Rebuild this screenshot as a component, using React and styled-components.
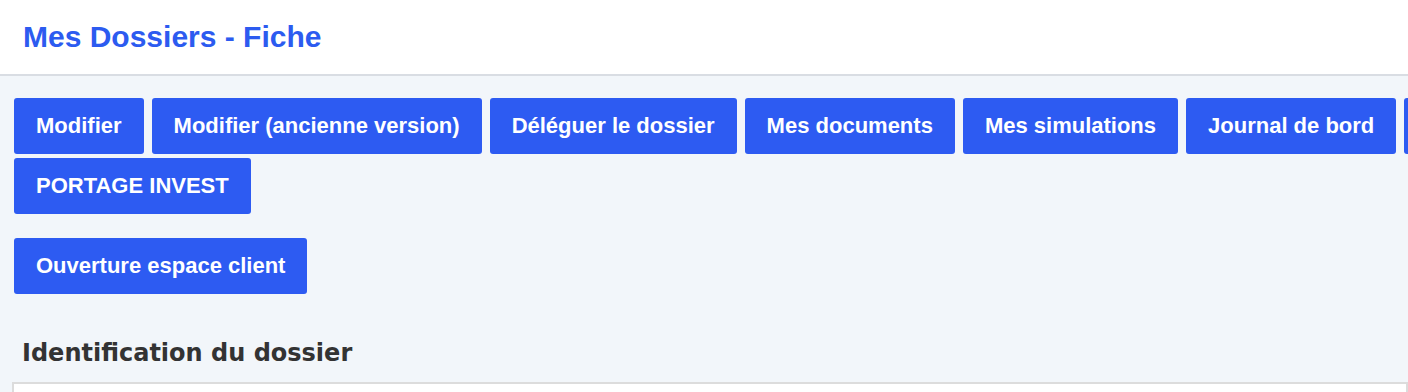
import React from "react";
import styled, { createGlobalStyle } from "styled-components";

const Global = createGlobalStyle`
  html, body { margin: 0; padding: 0; }
  body {
    background: #f2f6fa;
    font-family: "Liberation Sans", Arial, sans-serif;
    overflow: hidden;
  }
`;

const Page = styled.div`
  width: 1408px;
  min-height: 392px;
  overflow: hidden;
`;

const Header = styled.header`
  height: 74px;
  display: flex;
  align-items: center;
  padding: 0 23px;
  background: #ffffff;
  border-bottom: 2px solid #d9dde3;
`;

const Title = styled.h1`
  margin: 0;
  font-family: "Liberation Sans", Arial, sans-serif;
  font-size: 30px;
  font-weight: 700;
  color: #2c5bf0;
`;

const Content = styled.main`
  padding: 22px 0 0 14px;
  display: flex;
  flex-direction: column;
`;

const ButtonGroup = styled.div`
  display: flex;
  flex-wrap: wrap;
  column-gap: 8px;
  row-gap: 4px;
  width: ${(p) => p.$width || "auto"};
  margin-bottom: ${(p) => p.$mb || "0"};
`;

const ActionButton = styled.button`
  height: 56px;
  padding: 0 22px;
  border: none;
  border-radius: 3px;
  background: #2d5bf2;
  color: #ffffff;
  font-family: "Liberation Sans", Arial, sans-serif;
  font-size: 22px;
  font-weight: 700;
  white-space: nowrap;
  cursor: pointer;
`;

const SectionTitle = styled.h2`
  margin: 45px 0 15px 8px;
  font-family: "DejaVu Sans", Verdana, sans-serif;
  font-size: 24px;
  line-height: 28px;
  font-weight: 700;
  color: #333333;
`;

const Panel = styled.section`
  margin-left: -2px;
  height: 120px;
  background: #ffffff;
  border: 2px solid #dcdcdc;
`;

const actions = [
  "Modifier",
  "Modifier (ancienne version)",
  "Déléguer le dossier",
  "Mes documents",
  "Mes simulations",
  "Journal de bord",
  "Mes rendez-vous",
  "PORTAGE INVEST",
];

export default function App() {
  return (
    <Page>
      <Global />
      <Header>
        <Title>Mes Dossiers - Fiche</Title>
      </Header>
      <Content>
        <ButtonGroup $width="1640px" $mb="24px">
          {actions.map((a) => (
            <ActionButton key={a}>{a}</ActionButton>
          ))}
        </ButtonGroup>
        <ButtonGroup>
          <ActionButton>Ouverture espace client</ActionButton>
        </ButtonGroup>
        <SectionTitle>Identification du dossier</SectionTitle>
        <Panel />
      </Content>
    </Page>
  );
}
